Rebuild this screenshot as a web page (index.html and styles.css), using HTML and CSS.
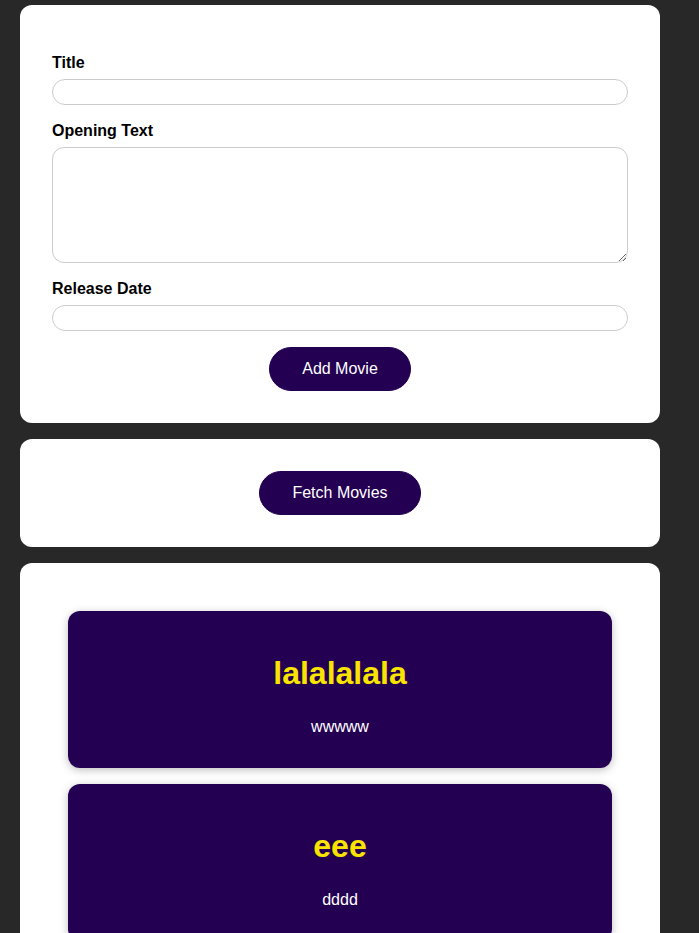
FILE: index.html
```html
<!DOCTYPE html>
<html lang="en">
<head>
<meta charset="utf-8">
<title>Movies</title>
<link rel="stylesheet" href="styles.css">
</head>
<body>
<main class="app">
  <section class="card">
    <form class="movie-form">
      <div class="control">
        <label for="title">Title</label>
        <input type="text" id="title" class="field">
      </div>
      <div class="control">
        <label for="opening">Opening Text</label>
        <textarea id="opening" rows="5" class="field area"></textarea>
      </div>
      <div class="control">
        <label for="date">Release Date</label>
        <input type="text" id="date" class="field">
      </div>
      <div class="actions">
        <button type="button" class="btn">Add Movie</button>
      </div>
    </form>
  </section>
  <section class="card actions">
    <button type="button" class="btn">Fetch Movies</button>
  </section>
  <section class="card">
    <ul class="movie-list">
      <li class="movie">
        <h2>lalalalala</h2>
        <p>wwwww</p>
      </li>
      <li class="movie">
        <h2>eee</h2>
        <p>dddd</p>
      </li>
    </ul>
  </section>
</main>
</body>
</html>
```
FILE: styles.css
```css
html, body {
  margin: 0;
  background: #282828;
  font-family: "Liberation Sans", Arial, sans-serif;
}
.app {
  width: 640px;
  padding: 5px 20px;
  display: flex;
  flex-direction: column;
  gap: 16px;
}
.card {
  background: #fff;
  border-radius: 12px;
  padding: 32px;
}
.control {
  margin: 16px 0;
}
.control label {
  display: block;
  font-weight: bold;
  font-size: 16px;
  line-height: 17px;
  padding-top: 1px;
  margin-bottom: 8px;
  color: #000;
}
.field {
  display: block;
  box-sizing: border-box;
  width: 100%;
  height: 26px;
  margin: 0;
  border: 1px solid #ccc;
  border-radius: 13px;
  font: inherit;
  padding: 2px 10px;
}
.area {
  height: 116px;
  border-radius: 12px;
}
.actions {
  display: flex;
  justify-content: center;
}
.btn {
  font: 16px/20px "Liberation Sans", Arial, sans-serif;
  background: #230052;
  color: #fff;
  border: 1px solid #230052;
  border-radius: 22px;
  padding: 11px 32px;
  cursor: pointer;
}
.movie-list {
  list-style: none;
  margin: 0;
  padding: 16px;
  display: flex;
  flex-direction: column;
  gap: 16px;
}
.movie {
  background: #230052;
  border-radius: 12px;
  padding: 16px;
  text-align: center;
  box-shadow: 0 2px 8px rgba(0, 0, 0, 0.26);
}
.movie h2 {
  font-size: 32px;
  font-weight: bold;
  color: #f9e400;
  margin: 28px 0 26px;
  line-height: 37px;
}
.movie p {
  color: #fff;
  font-size: 16px;
  line-height: 18px;
  margin: 16px 0;
}
```
